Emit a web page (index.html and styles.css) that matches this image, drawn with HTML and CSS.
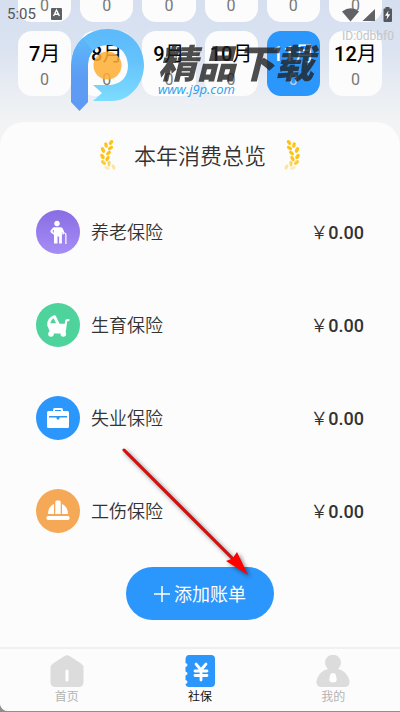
FILE: index.html
```html
<!DOCTYPE html>
<html lang="zh-CN">
<head>
<meta charset="utf-8">
<meta name="viewport" content="width=device-width, initial-scale=1">
<title>社保</title>
<link rel="stylesheet" href="styles.css">
</head>
<body>
<div class="app">
  <div class="status">
    <span class="clock">5:05</span>
    <svg class="status-app" width="11" height="12" viewBox="0 0 11 12"><rect width="11" height="12" rx="1" fill="#5d6065"/><path d="M2.6 8 5.5 2 8.4 8M3.8 6.2h3.4" fill="none" stroke="#fff" stroke-width="1.4"/></svg>
    <svg class="status-icons" width="50" height="15" viewBox="0 0 50 15"><path d="M0 4.5Q9 -2 17 4.500L8.500 14.500Z" fill="#606266"/><path d="M33 2v12H20.500Z" fill="#606266"/><path d="M43.500 0h4v1.500h1.500q1 0 1 1V14q0 1-1 1h-6.500q-1 0-1-1V2.500q0-1 1-1h1Z" fill="#55585c"/><path d="M46.500 3.500 43 8.800h2.300l-.8 4 3.800-5.600h-2.400Z" fill="#fff"/></svg>
  </div>
  <span class="device-id">ID:0dbbf0</span>

  <section class="months">
    <button class="month"><span class="name"><b>1</b>月</span><span class="count">0</span></button>
    <button class="month"><span class="name"><b>2</b>月</span><span class="count">0</span></button>
    <button class="month"><span class="name"><b>3</b>月</span><span class="count">0</span></button>
    <button class="month"><span class="name"><b>4</b>月</span><span class="count">0</span></button>
    <button class="month"><span class="name"><b>5</b>月</span><span class="count">0</span></button>
    <button class="month"><span class="name"><b>6</b>月</span><span class="count">0</span></button>
    <button class="month"><span class="name"><b>7</b>月</span><span class="count">0</span></button>
    <button class="month"><span class="name"><b>8</b>月</span><span class="count">0</span></button>
    <button class="month"><span class="name"><b>9</b>月</span><span class="count">0</span></button>
    <button class="month"><span class="name"><b>10</b>月</span><span class="count">0</span></button>
    <button class="month active"><span class="name"><b>11</b>月</span><span class="count">0</span></button>
    <button class="month"><span class="name"><b>12</b>月</span><span class="count">0</span></button>
  </section>

  <div class="watermark">
    <svg width="74" height="82" viewBox="0 0 74 82">
      <defs>
        <linearGradient id="bowl" x1="0" y1="0" x2="0" y2="1"><stop offset="0" stop-color="#5cb9fb"/><stop offset=".45" stop-color="#65c3fb"/><stop offset="1" stop-color="#7ddcff"/></linearGradient>
        <linearGradient id="stem" x1="0" y1="0" x2="0" y2="1"><stop offset="0" stop-color="#5cb9fb"/><stop offset=".55" stop-color="#5c9cf4"/><stop offset="1" stop-color="#5f9af5"/></linearGradient>
      </defs>
      <path d="M0 38Q0 20 11 9.500 21 0 37 0C58 0 73 16 73 36S58 72 41 72H22L31 64 22 56H40Q57 53 57 36Q55 17 37 16Q18 17 17 35Z" fill="url(#bowl)"/>
      <path d="M0 37Q1 18 12 9L22 22Q17 28 17 36V73L8.500 82 0 73Z" fill="url(#stem)"/>
      <circle cx="36.500" cy="36.500" r="14" fill="#ffad32" opacity=".85"/>
    </svg>
    <div class="watermark-text"><strong>精品下载</strong><span>www.j9p.com</span></div>
  </div>

  <main class="overview">
    <h1>
      <svg width="16" height="32" viewBox="0 0 16 32"><defs><linearGradient id="gold" gradientUnits="userSpaceOnUse" x1="0" y1="18" x2="0" y2="36"><stop offset="0" stop-color="#fcc419"/><stop offset="1" stop-color="#fcc419" stop-opacity=".1"/></linearGradient></defs><g id="laurel"><g fill="#fcc419"><ellipse cx="11" cy="2.500" rx="1.700" ry="2.800" transform="rotate(35 11 2.500)"/><ellipse cx="6" cy="5" rx="1.700" ry="2.900" transform="rotate(-15 6 5)"/><ellipse cx="10.500" cy="8" rx="1.700" ry="2.900" transform="rotate(60 10.500 8)"/><ellipse cx="3" cy="10" rx="1.800" ry="3" transform="rotate(-25 3 10)"/><ellipse cx="8.500" cy="13" rx="1.700" ry="2.900" transform="rotate(50 8.500 13)"/><ellipse cx="2.500" cy="16.500" rx="1.800" ry="3" transform="rotate(-30 2.500 16.500)"/><ellipse cx="7.500" cy="18.500" rx="1.700" ry="2.900" transform="rotate(30 7.500 18.500)"/></g><g fill="#fcc419"><ellipse cx="3.500" cy="22.500" rx="1.700" ry="3" transform="rotate(-45 3.500 22.500)" opacity=".85"/><ellipse cx="9" cy="23.500" rx="1.600" ry="2.900" opacity=".7"/><ellipse cx="7" cy="28" rx="1.600" ry="2.900" transform="rotate(-65 7 28)" opacity=".3"/><ellipse cx="13.500" cy="27" rx="1.600" ry="2.800" transform="rotate(-25 13.500 27)" opacity=".4"/></g></g></svg>
      <span>本年消费总览</span>
      <svg width="16" height="32" viewBox="0 0 16 32"><use href="#laurel" transform="matrix(-1 0 0 1 16 0)"/></svg>
    </h1>

    <ul class="list">
      <li>
        <svg width="44" height="44" viewBox="0 0 44 44"><defs><linearGradient id="violet" x1="0" y1="0" x2="0" y2="1"><stop offset="0" stop-color="#896de4"/><stop offset="1" stop-color="#a68df5"/></linearGradient></defs><circle cx="22" cy="22" r="22" fill="url(#violet)"/><circle cx="21" cy="13.500" r="2.700" fill="#fff"/><path d="M17.500 17.300h7q2 0 2.700 2.300l1.300 3.200-1.600.8-1-1.500V33.500h-2.800V26.500h-1.600v7h-3.500V24.700l-3.200-2.300q-.8-1 0-2.200Z" fill="#fff"/><path d="M16.700 20.400v1.600l1.100.8v-3.200Z" fill="#9b82ed"/><path d="M26.800 24.500q.2-1.700 1.700-1.500 1.500.2 1.400 1.700V34" fill="none" stroke="#fff" stroke-width="1.200"/></svg>
        <span>养老保险</span><strong><i>￥</i>0.00</strong>
      </li>
      <li>
        <svg width="44" height="44" viewBox="0 0 44 44"><circle cx="22" cy="22" r="22" fill="#4fd39c"/><path d="M11.200 22.500Q10.500 15 18 12.200q1.500-.3 2 1l3.500 7.500h5.300l.4-3.500q.6-1.500 4.200-1.200v2q-2-.2-2.200.8L30 27q-.3 2-1 3.500H14q-.5-3.500-2.800-8Z" fill="#fff"/><path d="M14.200 20.300q.7-3.500 3.300-5l2.700 5Z" fill="#4fd39c"/><circle cx="15" cy="31" r="2.800" fill="#fff"/><circle cx="27.300" cy="31" r="2.800" fill="#fff"/></svg>
        <span>生育保险</span><strong><i>￥</i>0.00</strong>
      </li>
      <li>
        <svg width="44" height="44" viewBox="0 0 44 44"><circle cx="22" cy="22" r="22" fill="#2b96fb"/><path d="M18 15v-1.200q0-.8.800-.8h6.400q.8 0 .8.800V15" fill="none" stroke="#fff" stroke-width="2"/><rect x="11" y="15" width="22" height="17" rx="1.500" fill="#fff"/><path d="M13 20h18v1.500h-7.500v1L22 24l-1.500-1.500v-1H13Z" fill="#2b96fb"/></svg>
        <span>失业保险</span><strong><i>￥</i>0.00</strong>
      </li>
      <li>
        <svg width="44" height="44" viewBox="0 0 44 44"><circle cx="22" cy="22" r="22" fill="#f5a855"/><path d="M12 25q.2-7.500 6-10v10ZM19.300 25V13q0-1.500 1.500-1.500h2.400q1.500 0 1.500 1.500v12ZM26 15q5.800 2.500 6 10h-6Z" fill="#fff"/><rect x="10.300" y="27" width="23.400" height="4" rx="2" fill="#fff"/></svg>
        <span>工伤保险</span><strong><i>￥</i>0.00</strong>
      </li>
    </ul>

    <button class="add"><svg width="16" height="16" viewBox="0 0 16 16"><path d="M8 0v16M0 8h16" stroke="#fff" stroke-width="1.500"/></svg><span>添加账单</span></button>
    <svg class="pointer" width="136" height="136" viewBox="0 0 136 136"><path d="m4 4 110 110" stroke="#8b1010" stroke-width="3" stroke-linecap="round"/><path d="m4 4 110 110" stroke="#f00" stroke-width="2.200" stroke-linecap="round"/><path d="M128 129 106 115l6.500-2.500L117 106Z" fill="#f00"/></svg>
  </main>

  <nav class="tabs">
    <a href="#home"><svg width="34" height="32" viewBox="0 0 34 32"><path d="M14.500 1q2.500-1.500 5 0L31 8.500q2.500 2 2.500 4V27q0 5-5 5h-23q-5 0-5-5V12.500q0-2 2.500-4Z" fill="#dcdcdc"/><rect x="15.500" y="14.500" width="3" height="12" rx="1.500" fill="#fff"/></svg><span>首页</span></a>
    <a href="#social" class="current"><svg width="34" height="32" viewBox="0 0 34 32"><path d="M6 0h22q4 0 4 4v24q0 4-4 4H6q-3 0-3.500-3 2-.5 2-2t-2-2v-4.500q2-.5 2-2t-2-2V12q2-.5 2-2t-2-2V4Q3 0 6 0Z" fill="#2b96fb"/><path d="m13 9 5 6 5-6M12 16h12M12 20.500h12M18 15v10" fill="none" stroke="#fff" stroke-width="2.800" stroke-linecap="round" stroke-linejoin="round"/></svg><span>社保</span></a>
    <a href="#me"><svg width="34" height="32" viewBox="0 0 34 32"><path d="M12 14a8 8 0 1 1 10 0q9 2 11.500 12 .5 6-5 6h-23Q0 32 .5 26 3 16 12 14Z" fill="#dcdcdc"/><path d="M14.500 19q2.500-2 5 0l1.200 5q.3 3.500-3.700 3.500T13.300 24Z" fill="#fff"/></svg><span>我的</span></a>
  </nav>
</div>
</body>
</html>
```
FILE: styles.css
```css
* { box-sizing: border-box; }

body {
  margin: 0;
  background: #8e8e8e;
  font-family: Roboto, "Noto Sans CJK SC", sans-serif;
  color: #333;
}

button {
  border: 0;
  padding: 0;
  font: inherit;
}

.app {
  position: relative;
  display: flex;
  flex-direction: column;
  min-height: calc(100vh - 1px);
  overflow: hidden;
  border-bottom-left-radius: 8px;
  background: linear-gradient(#d5dff0 0, #dbe3f1 50px, #e9edf3 90px, #f1f3f4 120px);
}

.status {
  position: absolute;
  inset: 6px 8px auto 7px;
  z-index: 2;
  display: flex;
  align-items: center;
  height: 16px;
  font-size: 15px;
  line-height: 16px;
  color: #555;
}

.status-app { margin-left: 15px; }
.status-icons { margin-left: auto; }

.device-id {
  position: absolute;
  top: 28px;
  right: 6px;
  z-index: 2;
  font-size: 12px;
  line-height: 16px;
  color: #c3c5c8;
}

.months {
  display: grid;
  grid-template-columns: repeat(6, 1fr);
  align-content: end;
  gap: 9px;
  height: 96px;
  padding: 0 18px;
}

.month {
  display: flex;
  flex-direction: column;
  align-items: center;
  height: 65px;
  padding-top: 11px;
  border-radius: 14px;
  background: #fcfcfc;
  color: #000;
}

.name {
  font-size: 20px;
  line-height: 24px;
  white-space: nowrap;
}

.name b { font-weight: 500; }

.count {
  padding-top: 4px;
  font-size: 16px;
  line-height: 20px;
  color: #777;
}

.month.active { background: #2b96fb; color: #fff; }
.month.active .count { color: #b9d9f8; }

.watermark {
  position: absolute;
  top: 29px;
  left: 71px;
  z-index: 1;
  display: flex;
  gap: 13px;
  pointer-events: none;
}

.watermark-text {
  display: flex;
  flex-direction: column;
  padding-top: 12px;
  font-style: italic;
}

.watermark-text strong {
  font-family: "Noto Sans CJK SC", sans-serif;
  font-size: 39px;
  font-weight: 900;
  line-height: 40px;
  color: #222;
  opacity: 0.8;
}

.watermark-text span {
  font-family: "Open Sans", sans-serif;
  font-size: 13px;
  line-height: 16px;
  color: #29a0ee;
}

.overview {
  position: relative;
  display: flex;
  flex-direction: column;
  align-items: center;
  flex: 1;
  margin-top: 26px;
  border-radius: 24px 24px 0 0;
  background: #fcfcfc;
}

.overview h1 {
  display: flex;
  align-items: center;
  gap: 18px;
  height: 63px;
  margin: 0;
  padding-top: 4px;
  font-size: 22px;
  font-weight: 350;
}

.overview h1 span { padding-bottom: 4px; }

.list {
  align-self: stretch;
  margin: 0;
  padding: 0 36px;
  list-style: none;
}

.list li {
  display: flex;
  align-items: center;
  gap: 11px;
  height: 93px;
  font-size: 18px;
  font-weight: 350;
}

.list span,
.list strong,
.add span { padding-bottom: 2px; }

.list strong {
  margin-left: auto;
  font-weight: 500;
}

.list i {
  font-style: normal;
  font-weight: 350;
}

.add {
  display: flex;
  align-items: center;
  justify-content: center;
  gap: 4px;
  width: 148px;
  height: 53px;
  margin: 10px 0 27px;
  border-radius: 27px;
  background: #2b96fb;
  font-size: 18px;
  color: #fff;
}

.pointer {
  position: absolute;
  top: 324px;
  left: 120px;
  overflow: visible;
  pointer-events: none;
  filter: drop-shadow(2px 2px 2px rgba(0, 0, 0, 0.5));
}

.tabs {
  display: flex;
  height: 64px;
  border-top: 2px solid #f0f0f0;
  background: #fcfcfc;
}

.tabs a {
  display: flex;
  flex: 1;
  flex-direction: column;
  align-items: center;
  padding-top: 6px;
  font-size: 12px;
  line-height: 20px;
  color: #b3b3b3;
  text-decoration: none;
}

.tabs .current { color: #111; }
```
